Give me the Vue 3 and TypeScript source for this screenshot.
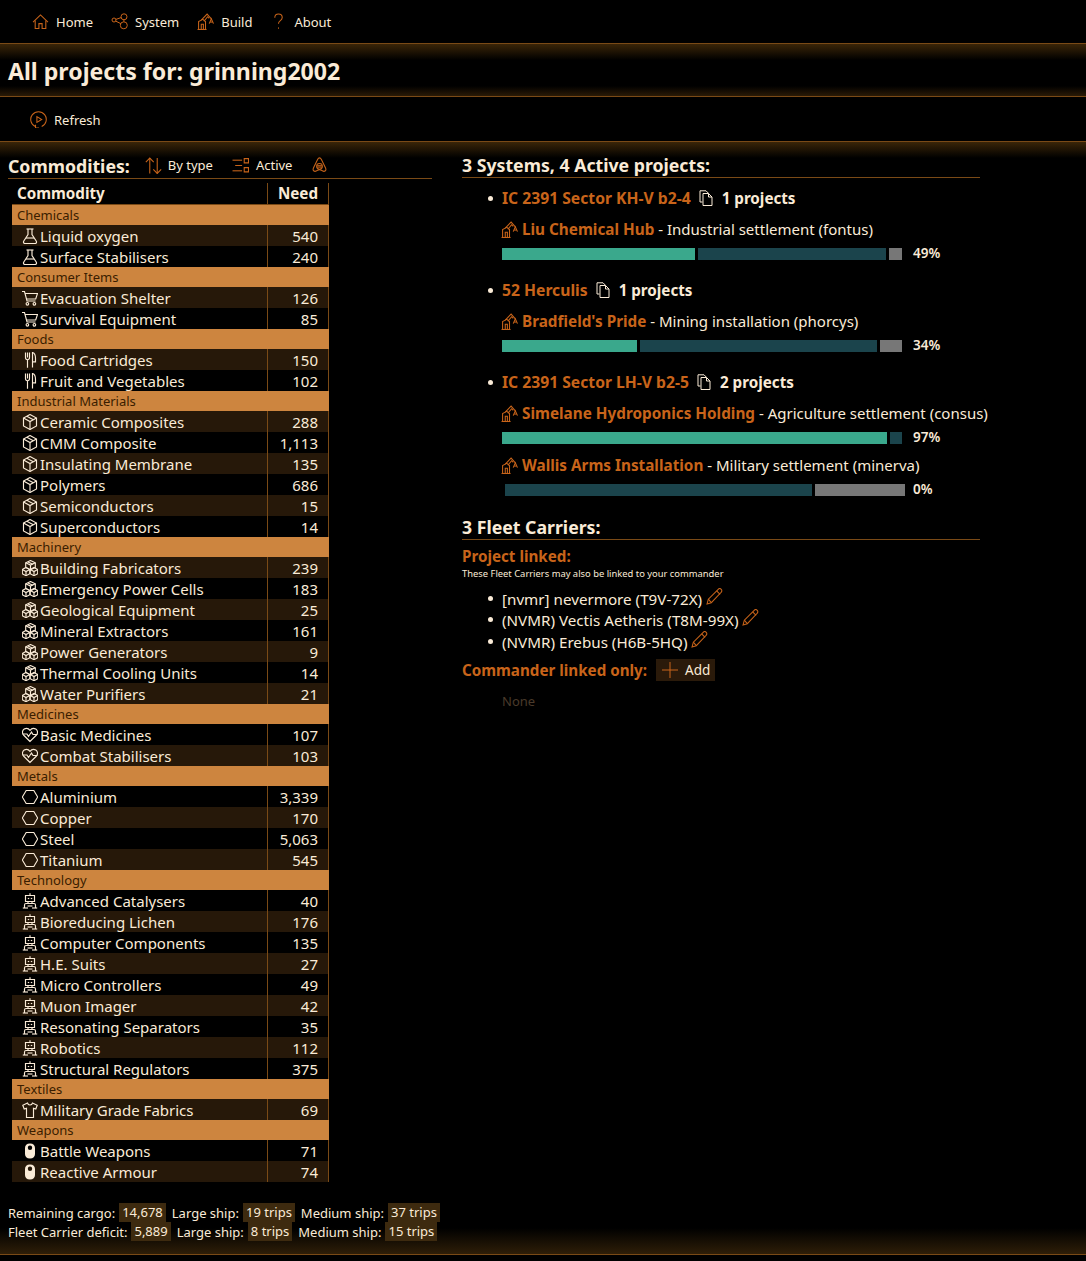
<script setup lang="ts">
interface Commodity {
  name: string;
  need: string;
}
interface Group {
  title: string;
  icon: string;
  items: Commodity[];
}
interface Site {
  name: string;
  desc: string;
  done: number;
  mid: number;
  rest: number;
  pct: string;
}
interface System {
  name: string;
  count: string;
  sites: Site[];
}

const icons: Record<string, string[]> = {
  home: ['M1 8.500 8 1.800l7 6.700', 'M3 7v7.500h3.500V10h3v4.500H13V7'],
  system: ['M5 6.500a2 2 0 1 1-4 0 2 2 0 0 1 4 0z', 'M16 3.300a3 3 0 1 1-6 0 3 3 0 0 1 6 0z', 'M16.300 11.800a3.500 3.500 0 1 1-7 0 3.500 3.500 0 0 1 7 0z', 'M4.900 5.900 10.100 4.100', 'M4.700 7.600 9.900 10.200', 'M12.900 6.300v2'],
  build: ['M.5 15.500H9', 'M1.500 15.500V8L5.500 6l2.500 2v7.500', 'M4 15.500v-5h2v5', 'M4 6.800 9.500 1 13.500 5.500', 'M6.500 7.800 10 3.500l1.500 1.500', 'M11.500 10l2-4.500 2 4.500', 'M12.300 8.500h2.400'],
  help: ['M4.500 4.500C4.500 2.300 6 1 8 1s3.500 1.300 3.500 3.300c0 1.600-1 2.400-2 3.100-1 .7-1.500 1.400-1.500 2.800', 'M8 13.600v1.200'],
  refresh: ['M5 14.600A7.300 7.300 0 1 1 11 14.600', 'M6.500 5.300v5.400L11 8z', 'M8.500 16H5.200v-3'],
  sort: ['M4.500 15.500V1', 'M.8 4.800 4.500 1l3.700 3.800', 'M11.500 1v14.500', 'M7.800 11.700l3.700 3.800 3.700-3.800'],
  filter: ['M.5 3h9', 'M3 8h6.500', 'M.5 13h9', 'M11.500 1.500h4v4h-4z', 'M11.500 10h4v4h-4z'],
  tent: ['M8 .8c.9 0 1.300.5 1.800 1.500l3.900 8c.8 1.700.2 3.200-1.500 3.200-.9 0-1.700-.5-2.400-1-.6-.4-1.200-.6-1.800-.6s-1.200.2-1.800.6c-.7.5-1.500 1-2.400 1-1.700 0-2.300-1.500-1.500-3.200l3.900-8C6.700 1.300 7.100.8 8 .8z', 'M10.700 8.800a2.700 2.700 0 1 1-5.400 0 2.700 2.700 0 0 1 5.400 0z', 'M5.800 8.200h4.400', 'M5.800 9.500h4.400'],
  flask: ['M4.500 1h7', 'M6 1v5.500L1.800 13c-.8 1.300-.1 2.500 1.200 2.500h10c1.300 0 2-1.200 1.200-2.500L10 6.500V1', 'M4 10h8'],
  cart: ['M0 1.500h2.500L5 11h8.500', 'M3 3.500h12.500l-1.800 5.500H4.500', 'M6.700 13.800a1.300 1.300 0 1 1-2.600 0 1.300 1.300 0 0 1 2.600 0z', 'M13.700 13.800a1.300 1.300 0 1 1-2.600 0 1.300 1.300 0 0 1 2.600 0z'],
  food: ['M3.500 .5v5c0 1.300.8 2.200 2 2.200v8', 'M5.500.5v5', 'M7.500.5v5c0 1.300-.8 2.200-2 2.200', 'M10.500 15.500V.5c2 .5 3 2.800 3 5.800v3.500h-3'],
  cube: ['M8 .5 14.500 4v8L8 15.500 1.500 12V4z', 'M1.500 4 8 7.500 14.500 4', 'M8 7.500v8', 'M4.800 2.200l6.500 3.500'],
  cubes: ['M8.500.5l4.800 2.300v4.700l-4.800 2.300L3.700 7.500V2.800z', 'M3.700 2.800l4.800 2.300 4.800-2.300', 'M8.500 5.100v5', 'M6 2l4.800 2.300', 'M4 7.500l3.800 2v4.200L4 15.700.3 13.700V9.500z', 'M.3 9.500 4 11.500l3.800-2', 'M4 11.500v4.200', 'M12 7.500l3.700 2v4.200L12 15.700l-3.800-2V9.500z', 'M8.200 9.500l3.800 2 3.700-2', 'M12 11.500v4.200'],
  heart: ['M8 14.500 1.500 8C-.2 6 .3 3.300 2.200 2.100 4 1 6.500 1.300 8 3.300c1.500-2 4-2.300 5.800-1.200 1.900 1.200 2.400 3.900.7 5.900z', 'M.5 7h4.500l1.500 2.500L9.500 5 11 7.500h4.500'],
  hex: ['M4.200 1.500h7.600L15.700 8l-3.900 6.500H4.200L.3 8z'],
  robot: ['M8 .3v2', 'M3.500 2.500h9v6h-9z', 'M5.800 5.500h1.400', 'M8.800 5.500h1.400', 'M6 8.500v2', 'M10 8.500v2', 'M2.500 15v-3c0-.9.6-1.500 1.500-1.500h8c.9 0 1.500.6 1.500 1.500v3', 'M.8 15h5.200', 'M10 15h5.200', 'M5.500 13h5'],
  shirt: ['M5.500 1 .8 3.200l1.400 3.800 2.300-.8V15.500h7V6.200l2.300.8 1.400-3.800L10.500 1c-.3 1.300-1.200 2-2.500 2S5.800 2.300 5.500 1z'],
  copy: ['M3.500 12H1V.8h6l2.500 2.500', 'M4 3.500h5.500l3.500 3.500v8.500H4z', 'M9.500 3.500V7H13'],
  pencil: ['M1 15l1.200-4.500 9.300-9.300c.8-.8 2-.8 2.800 0s.8 2 0 2.800L5 13.800z', 'M10 2.700l3.300 3.300', 'M2.200 10.500 5 13.800'],
  plus: ['M8 0v16', 'M0 8h16'],
};

const groups: Group[] = [
  { title: 'Chemicals', icon: 'flask', items: [{ name: 'Liquid oxygen', need: '540' }, { name: 'Surface Stabilisers', need: '240' }] },
  { title: 'Consumer Items', icon: 'cart', items: [{ name: 'Evacuation Shelter', need: '126' }, { name: 'Survival Equipment', need: '85' }] },
  { title: 'Foods', icon: 'food', items: [{ name: 'Food Cartridges', need: '150' }, { name: 'Fruit and Vegetables', need: '102' }] },
  {
    title: 'Industrial Materials',
    icon: 'cube',
    items: [
      { name: 'Ceramic Composites', need: '288' },
      { name: 'CMM Composite', need: '1,113' },
      { name: 'Insulating Membrane', need: '135' },
      { name: 'Polymers', need: '686' },
      { name: 'Semiconductors', need: '15' },
      { name: 'Superconductors', need: '14' },
    ],
  },
  {
    title: 'Machinery',
    icon: 'cubes',
    items: [
      { name: 'Building Fabricators', need: '239' },
      { name: 'Emergency Power Cells', need: '183' },
      { name: 'Geological Equipment', need: '25' },
      { name: 'Mineral Extractors', need: '161' },
      { name: 'Power Generators', need: '9' },
      { name: 'Thermal Cooling Units', need: '14' },
      { name: 'Water Purifiers', need: '21' },
    ],
  },
  { title: 'Medicines', icon: 'heart', items: [{ name: 'Basic Medicines', need: '107' }, { name: 'Combat Stabilisers', need: '103' }] },
  {
    title: 'Metals',
    icon: 'hex',
    items: [
      { name: 'Aluminium', need: '3,339' },
      { name: 'Copper', need: '170' },
      { name: 'Steel', need: '5,063' },
      { name: 'Titanium', need: '545' },
    ],
  },
  {
    title: 'Technology',
    icon: 'robot',
    items: [
      { name: 'Advanced Catalysers', need: '40' },
      { name: 'Bioreducing Lichen', need: '176' },
      { name: 'Computer Components', need: '135' },
      { name: 'H.E. Suits', need: '27' },
      { name: 'Micro Controllers', need: '49' },
      { name: 'Muon Imager', need: '42' },
      { name: 'Resonating Separators', need: '35' },
      { name: 'Robotics', need: '112' },
      { name: 'Structural Regulators', need: '375' },
    ],
  },
  { title: 'Textiles', icon: 'shirt', items: [{ name: 'Military Grade Fabrics', need: '69' }] },
  { title: 'Weapons', icon: 'capsule', items: [{ name: 'Battle Weapons', need: '71' }, { name: 'Reactive Armour', need: '74' }] },
];

// stripes run through the whole table, group rows don't count
const rows = (() => {
  let n = 0;
  return groups.map((g) => ({
    ...g,
    items: g.items.map((c) => ({ ...c, striped: n++ % 2 === 0 })),
  }));
})();

const systems: System[] = [
  {
    name: 'IC 2391 Sector KH-V b2-4',
    count: '1 projects',
    sites: [{ name: 'Liu Chemical Hub', desc: ' - Industrial settlement (fontus)', done: 193, mid: 188, rest: 13, pct: '49%' }],
  },
  {
    name: '52 Herculis',
    count: '1 projects',
    sites: [{ name: "Bradfield's Pride", desc: ' - Mining installation (phorcys)', done: 135, mid: 237, rest: 22, pct: '34%' }],
  },
  {
    name: 'IC 2391 Sector LH-V b2-5',
    count: '2 projects',
    sites: [
      { name: 'Simelane Hydroponics Holding', desc: ' - Agriculture settlement (consus)', done: 385, mid: 0, rest: 12, pct: '97%' },
      { name: 'Wallis Arms Installation', desc: ' - Military settlement (minerva)', done: 0, mid: 307, rest: 90, pct: '0%' },
    ],
  },
];

const carriers = ['[nvmr] nevermore (T9V-72X)', '(NVMR) Vectis Aetheris (T8M-99X)', '(NVMR) Erebus (H6B-5HQ)'];
</script>

<template>
  <div class="page">
    <nav class="topnav">
      <a class="nav-item"><svg class="ico" viewBox="0 0 16 16"><path v-for="d in icons.home" :key="d" :d="d" /></svg>Home</a>
      <a class="nav-item"><svg class="ico" viewBox="0 0 17 16"><path v-for="d in icons.system" :key="d" :d="d" /></svg>System</a>
      <a class="nav-item"><svg class="ico" viewBox="0 0 16 16"><path v-for="d in icons.build" :key="d" :d="d" /></svg>Build</a>
      <a class="nav-item help"><svg class="ico" viewBox="0 0 16 16"><path v-for="d in icons.help" :key="d" :d="d" /></svg>About</a>
    </nav>

    <header class="title-band">
      <h1>All projects for: grinning2002</h1>
    </header>

    <div class="toolbar">
      <a class="nav-item"><svg class="ico" viewBox="0 0 16 16"><path v-for="d in icons.refresh" :key="d" :d="d" /></svg>Refresh</a>
    </div>

    <main class="content">
      <section class="left">
        <div class="heading-row">
          <h2>Commodities:</h2>
          <a class="nav-item tool"><svg class="ico" viewBox="0 0 16 16"><path v-for="d in icons.sort" :key="d" :d="d" /></svg>By type</a>
          <a class="nav-item tool"><svg class="ico" viewBox="0 0 16 16"><path v-for="d in icons.filter" :key="d" :d="d" /></svg>Active</a>
          <a class="nav-item tool"><svg class="ico" viewBox="0 0 16 16"><path v-for="d in icons.tent" :key="d" :d="d" /></svg></a>
        </div>

        <table class="needs">
          <thead>
            <tr>
              <th class="c-name">Commodity</th>
              <th class="c-need">Need</th>
            </tr>
          </thead>
          <tbody>
            <template v-for="g in rows" :key="g.title">
              <tr class="group">
                <td colspan="2">{{ g.title }}</td>
              </tr>
              <tr v-for="c in g.items" :key="c.name" :class="{ striped: c.striped }">
                <td class="c-name">
                  <div class="cell">
                    <svg v-if="g.icon === 'capsule'" class="ico-sm" viewBox="0 0 16 16">
                      <path class="solid" fill-rule="evenodd" d="M8 .5c3.300 0 5 1.800 5 4.500v6c0 2.700-1.700 4.500-5 4.500S3 13.700 3 11V5C3 2.300 4.700.5 8 .5zM8 2.500a2.200 2.200 0 1 0 0 4.400 2.200 2.200 0 0 0 0-4.400z" />
                    </svg>
                    <svg v-else class="ico-sm" viewBox="0 0 16 16"><path v-for="d in icons[g.icon]" :key="d" :d="d" /></svg>
                    {{ c.name }}
                  </div>
                </td>
                <td class="c-need">{{ c.need }}</td>
              </tr>
            </template>
          </tbody>
        </table>

        <div class="totals">
          <div class="total-row"><span>Remaining cargo:</span><span class="chip">14,678</span><span>Large ship:</span><span class="chip">19 trips</span><span>Medium ship:</span><span class="chip">37 trips</span></div>
          <div class="total-row"><span>Fleet Carrier deficit:</span><span class="chip">5,889</span><span>Large ship:</span><span class="chip">8 trips</span><span>Medium ship:</span><span class="chip">15 trips</span></div>
        </div>
      </section>

      <section class="right">
        <h2 class="rule">3 Systems, 4 Active projects:</h2>
        <ul class="systems">
          <li v-for="s in systems" :key="s.name">
            <div class="sys-line">
              <a class="link">{{ s.name }}</a>
              <svg class="ico-sm copy" viewBox="0 0 16 16"><path v-for="d in icons.copy" :key="d" :d="d" /></svg>
              <b>{{ s.count }}</b>
            </div>
            <div v-for="p in s.sites" :key="p.name" class="site">
              <div class="site-line">
                <svg class="ico" viewBox="0 0 16 16"><path v-for="d in icons.build" :key="d" :d="d" /></svg>
                <span><a class="link site-name">{{ p.name }}</a>{{ p.desc }}</span>
              </div>
              <div class="bar-line">
                <div class="bar">
                  <i v-if="p.done" class="seg done" :style="{ width: p.done + 'px' }"></i>
                  <i v-else class="seg-gap"></i>
                  <i v-if="p.mid" class="seg mid" :style="{ width: p.mid + 'px' }"></i>
                  <i class="seg rest" :class="{ teal: p.pct === '97%' }" :style="{ width: p.rest + 'px' }"></i>
                </div>
                <span class="pct">{{ p.pct }}</span>
              </div>
            </div>
          </li>
        </ul>

        <h2 class="rule fleet">3 Fleet Carriers:</h2>
        <div class="link sub">Project linked:</div>
        <div class="fine">These Fleet Carriers may also be linked to your commander</div>
        <ul class="carriers">
          <li v-for="c in carriers" :key="c">
            {{ c }}
            <svg class="pencil" viewBox="0 0 16 16"><path v-for="d in icons.pencil" :key="d" :d="d" /></svg>
          </li>
        </ul>
        <div class="cmdr">
          <span class="link sub">Commander linked only:</span>
          <a class="add"><svg class="ico-sm" viewBox="0 0 16 16"><path v-for="d in icons.plus" :key="d" :d="d" /></svg>Add</a>
        </div>
        <div class="none">None</div>
      </section>
    </main>
  </div>
</template>

<style>
html,
body {
  background: #000;
}
</style>

<style scoped>
.page {
  width: 1086px;
  background: #000;
  color: #faebd7;
  font-family: "Noto Sans", "Open Sans", sans-serif;
  font-size: 13px;
  padding-bottom: 6px;
}

a {
  color: inherit;
  text-decoration: none;
}

svg {
  fill: none;
  stroke: currentColor;
  stroke-width: 1;
  flex: none;
}

.ico {
  width: 17px;
  height: 17px;
  stroke: #c8641a;
}

.ico-sm {
  width: 16px;
  height: 16px;
}

.solid {
  fill: currentColor;
  stroke: none;
}

.topnav {
  height: 43px;
  display: flex;
  align-items: center;
  padding-left: 32px;
  gap: 18px;
}

.nav-item {
  display: inline-flex;
  align-items: center;
  gap: 6px;
}

.topnav .nav-item,
.toolbar .nav-item {
  gap: 7px;
}

.title-band {
  height: 52px;
  border-top: 1px solid #7a4a16;
  border-bottom: 1px solid #7a4a16;
  background: linear-gradient(#3a2508, #000 16px, #000 calc(100% - 10px), #2a1a06);
  display: flex;
  align-items: center;
  padding-left: 8px;
  box-sizing: content-box;
}

h1 {
  margin: 2px 0 0;
  font-size: 23.100px;
  font-weight: 700;
}

.toolbar {
  height: 44px;
  display: flex;
  align-items: center;
  padding-left: 30px;
}

.toolbar .nav-item {
  margin-top: 1px;
}

.content {
  display: flex;
  border-top: 1px solid #7a4a16;
  border-bottom: 1px solid #7a4a16;
  background: linear-gradient(#3a2508, #000 16px, #000 calc(100% - 26px), #2e1e08);
  padding: 12px 0 13px 8px;
}

.left {
  width: 424px;
  flex: none;
}

h2 {
  margin: 0;
  font-size: 17.700px;
  font-weight: 700;
  line-height: 24px;
}

.heading-row {
  display: flex;
  align-items: center;
  height: 24px;
  border-bottom: 1px solid #7a4a16;
}

.tool {
  margin-left: 15px;
  padding-bottom: 2px;
}

.tool + .tool {
  margin-left: 19px;
  gap: 7px;
}

.needs {
  border-collapse: collapse;
  table-layout: fixed;
  width: 317px;
  margin: 4px 0 0 4px;
  font-size: 15px;
}

th,
td {
  padding: 0;
}

th {
  height: 21px;
  line-height: 21px;
  font-size: 15.200px;
  font-weight: 700;
  text-align: left;
  border-bottom: 1px solid #7a4a16;
}

th.c-name {
  width: 250px;
  padding-left: 5px;
}

td.c-name {
  padding-left: 10px;
}

.c-need,
th.c-need {
  text-align: right;
  padding-right: 10px;
  border-left: 1px solid #7a4a16;
  border-right: 1px solid #7a4a16;
}

tbody tr {
  height: 21px;
}

tr.group {
  height: 20px;
}

.group td {
  background: #cd853f;
  color: #3a1d00;
  font-size: 13px;
  padding-left: 5px;
  line-height: 20px;
}

.striped td {
  background: #261809;
}

.cell {
  display: flex;
  align-items: center;
  gap: 2px;
  height: 21px;
}

.cell svg {
  stroke-width: 1.150;
}

.totals {
  margin-top: 21px;
  white-space: nowrap;
}

.total-row {
  display: flex;
  align-items: center;
  height: 19px;
}

.chip {
  background: #3d2a0f;
  height: 19px;
  line-height: 19px;
  padding: 0 3px;
  margin: 0 6px 0 4px;
}

.right {
  margin-left: 30px;
  width: 518px;
  font-size: 15px;
}

.rule {
  border-bottom: 1px solid #7a4a16;
  line-height: 23px;
}

.systems,
.carriers {
  margin: 0;
  padding-left: 40px;
  list-style: none;
}

.systems li,
.carriers li {
  position: relative;
}

.systems li::before,
.carriers li::before {
  content: "";
  position: absolute;
  left: -14px;
  top: 8px;
  width: 5px;
  height: 5px;
  border-radius: 50%;
  background: #faebd7;
}

.systems li::before {
  top: 18px;
}

.systems li {
  margin-bottom: 18px;
  padding-top: 8px;
}

.systems li::before {
  top: 18px;
}

.systems li:last-child {
  margin-bottom: 0;
}

.systems li + li {
  margin-top: -8px;
}

.link {
  color: #c8641a;
  font-weight: 700;
  font-size: 15.700px;
}

.site-name {
  font-size: 15.300px;
}

.sys-line {
  display: flex;
  align-items: center;
  gap: 7px;
  height: 24px;
  font-size: 15.200px;
}

.copy {
  margin-left: 1px;
}

.site {
  margin-top: 7px;
}

.site + .site {
  margin-top: 9px;
}

.site-line {
  display: flex;
  align-items: center;
  gap: 4px;
  height: 24px;
  margin-left: -1px;
  white-space: pre;
}

.bar-line {
  display: flex;
  align-items: center;
  height: 12px;
  margin-top: 7px;
}

.bar {
  display: flex;
  gap: 3px;
  height: 12px;
  width: 403px;
}

.seg {
  display: block;
  height: 12px;
}

.seg-gap {
  display: block;
  width: 0;
}

.done {
  background: #3aa88c;
}

.mid {
  background: #1b444c;
}

.rest {
  background: #777;
}

.rest.teal {
  background: #1b444c;
}

.pct {
  margin-left: 8px;
  padding-bottom: 2px;
  font-size: 13.500px;
  font-weight: 600;
}

.fleet {
  margin-top: 20px;
}

.sub {
  font-size: 15.200px;
  line-height: 22px;
  margin-top: 5px;
}

.fine {
  font-size: 9.400px;
  line-height: 12px;
  margin-top: 1px;
}

.carriers {
  margin-top: 8px;
  font-size: 15.200px;
}

.carriers li {
  height: 21.300px;
  line-height: 21px;
}

.pencil {
  width: 17px;
  height: 17px;
  stroke: #c8641a;
  vertical-align: 0;
}

.cmdr {
  display: flex;
  align-items: center;
  gap: 9px;
  margin-top: 7.600px;
}

.cmdr .sub {
  margin-top: 0;
}

.add {
  display: inline-flex;
  align-items: center;
  gap: 7px;
  background: #2a1a0a;
  height: 22px;
  padding: 0 5px 0 6px;
  font-size: 13.500px;
}

.add svg {
  stroke: #c8641a;
}

.none {
  color: #4a3a2a;
  padding-left: 40px;
  margin-top: 11px;
  font-size: 13px;
}
</style>
